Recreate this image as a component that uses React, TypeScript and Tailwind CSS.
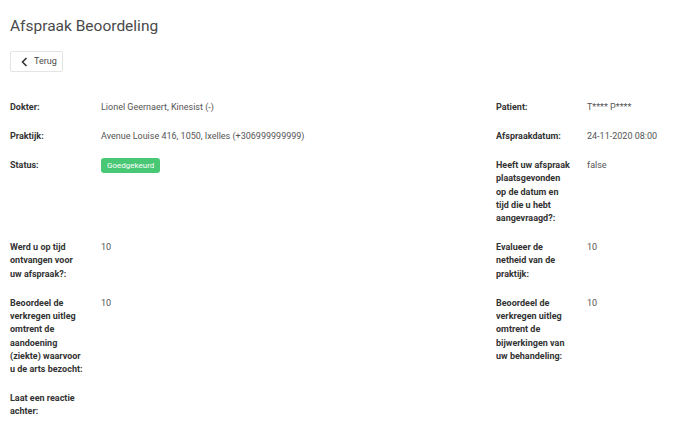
import React from "react";

const Row = ({ l1, v1, l2, v2 }: { l1: React.ReactNode; v1: React.ReactNode; l2?: React.ReactNode; v2?: React.ReactNode }) => (
  <div className="flex py-[7.8px]">
    <div className="w-[91px] shrink-0 pr-[16px] font-bold text-[#333333]">{l1}</div>
    <div className="w-[395px] shrink-0 text-[#555555]">{v1}</div>
    <div className="w-[91px] shrink-0 pr-[16px] font-bold text-[#333333]">{l2}</div>
    <div className="flex-1 text-[#555555]">{v2}</div>
  </div>
);

export default function App() {
  return (
    <div className="w-[688px] h-[432px] bg-white px-[10px] overflow-hidden" style={{ fontFamily: "Roboto, 'Liberation Sans', sans-serif" }}>
      <h1 className="pt-[15px] text-[15.5px] leading-[22px] text-[#4a4a4a]">Afspraak Beoordeling</h1>
      <div className="mt-[14px]">
        <button className="flex items-center h-[21px] w-[53px] border border-[#e4e4e4] rounded-[2px] bg-white pl-[10px] text-[9px] text-[#4a4a4a]">
          <svg width="7" height="10" viewBox="0 0 7 10" className="mr-[6px]">
            <path d="M5.5 1 L1.5 5 L5.5 9" stroke="#333" strokeWidth="1.6" fill="none" />
          </svg>
          Terug
        </button>
      </div>
      <div className="mt-[21.5px] text-[9px] leading-[13.3px]">
        <Row l1="Dokter:" v1="Lionel Geernaert, Kinesist (-)" l2="Patient:" v2="T**** P****" />
        <Row l1="Praktijk:" v1="Avenue Louise 416, 1050, Ixelles (+306999999999)" l2="Afspraakdatum:" v2="24-11-2020 08:00" />
        <Row
          l1="Status:"
          v1={
            <span className="inline-block bg-[#48c774] text-white rounded-[3px] px-[6px] text-[8px] leading-[15px] -mt-[1px]">Goedgekeurd</span>
          }
          l2="Heeft uw afspraak plaatsgevonden op de datum en tijd die u hebt aangevraagd?:"
          v2="false"
        />
        <Row l1="Werd u op tijd ontvangen voor uw afspraak?:" v1="10" l2="Evalueer de netheid van de praktijk:" v2="10" />
        <Row
          l1="Beoordeel de verkregen uitleg omtrent de aandoening (ziekte) waarvoor u de arts bezocht:"
          v1="10"
          l2="Beoordeel de verkregen uitleg omtrent de bijwerkingen van uw behandeling:"
          v2="10"
        />
        <Row l1="Laat een reactie achter:" v1="" />
      </div>
    </div>
  );
}
